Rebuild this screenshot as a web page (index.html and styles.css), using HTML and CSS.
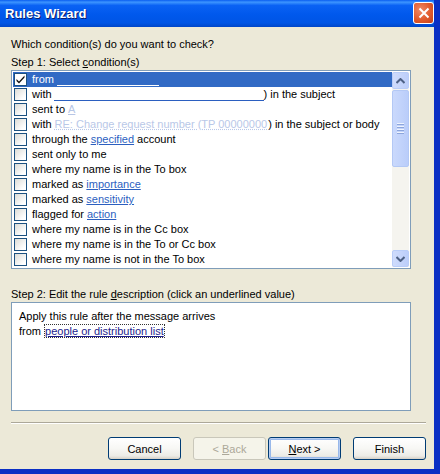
FILE: index.html
```html
<!DOCTYPE html>
<html lang="en">
<head>
    <meta charset="UTF-8">
    <title>Rules Wizard</title>
    <link rel="stylesheet" href="styles.css">
</head>
<body>
    <div class="window">
        <div class="titlebar">
            <span class="title">Rules Wizard</span>
            <div class="close">
                <svg width="12" height="12" viewBox="0 0 12 12"><path d="M1.5 1.5 L10.5 10.5 M10.5 1.5 L1.5 10.5" stroke="#fff" stroke-width="2" fill="none"/></svg>
            </div>
        </div>
        <div class="content">
            <div class="label">Which condition(s) do you want to check?</div>
            <div class="label">Step 1: Select <u>c</u>ondition(s)</div>

            <div class="listbox">
                <div class="rows">
                    <div class="row selected">
                        <span class="check checked">
                            <svg width="11" height="11" viewBox="0 0 11 11"><path d="M1.5 5 L4 7.5 L9.5 1.5 L9.5 3.5 L4 9.5 L1.5 7 Z" fill="#111"/></svg>
                        </span>
                        from <span class="hidden-link sel-link"></span>
                    </div>
                    <div class="row"><span class="check"></span>with <span class="hidden-link wide"></span>) in the subject</div>
                    <div class="row"><span class="check"></span>sent to <span class="faint">A</span></div>
                    <div class="row"><span class="check"></span>with <span class="faint-link">RE: Change request number (TP 00000000</span>) in the subject or body</div>
                    <div class="row"><span class="check"></span>through the <a class="link">specified</a> account</div>
                    <div class="row"><span class="check"></span>sent only to me</div>
                    <div class="row"><span class="check"></span>where my name is in the To box</div>
                    <div class="row"><span class="check"></span>marked as <a class="link">importance</a></div>
                    <div class="row"><span class="check"></span>marked as <a class="link">sensitivity</a></div>
                    <div class="row"><span class="check"></span>flagged for <a class="link">action</a></div>
                    <div class="row"><span class="check"></span>where my name is in the Cc box</div>
                    <div class="row"><span class="check"></span>where my name is in the To or Cc box</div>
                    <div class="row"><span class="check"></span>where my name is not in the To box</div>
                </div>
                <div class="scrollbar">
                    <div class="sb-btn">
                        <svg width="9" height="6" viewBox="0 0 9 6"><path d="M0.5 5 L4.5 1 L8.5 5" stroke="#4d6185" stroke-width="2" fill="none"/></svg>
                    </div>
                    <div class="sb-thumb">
                        <span></span><span></span><span></span><span></span>
                    </div>
                    <div class="sb-track"></div>
                    <div class="sb-btn">
                        <svg width="9" height="6" viewBox="0 0 9 6"><path d="M0.5 1 L4.5 5 L8.5 1" stroke="#4d6185" stroke-width="2" fill="none"/></svg>
                    </div>
                </div>
            </div>

            <div class="label step2">Step 2: Edit the rule <u>d</u>escription (click an underlined value)</div>
            <div class="desc">
                <div>Apply this rule after the message arrives</div>
                <div>from <a class="focus-link">people or distribution list</a></div>
            </div>

            <div class="separator"></div>

            <div class="buttons">
                <button class="btn">Cancel</button>
                <button class="btn disabled">&lt; <u>B</u>ack</button>
                <button class="btn default"><u>N</u>ext &gt;</button>
                <button class="btn finish">Finish</button>
            </div>
        </div>
    </div>
</body>
</html>
```

FILE: styles.css
```css
body {
    margin: 0;
    font-family: "Liberation Sans", Arial, sans-serif;
    font-size: 11px;
    color: #000;
    background: #ece9d8;
}
.window {
    width: 440px;
    height: 474px;
    box-sizing: border-box;
    display: flex;
    flex-direction: column;
    background: #ece9d8;
    border-right: 6px solid #0a2fc4;
    border-bottom: 5px solid #0a2fc4;
}
.titlebar {
    height: 27px;
    flex: none;
    display: flex;
    align-items: center;
    justify-content: space-between;
    padding: 0 0 0 5px;
    background: linear-gradient(to bottom, #0a5ef0 0%, #3d95ff 8%, #0a62f4 20%, #0058ec 55%, #0055e5 85%, #0046c8 100%);
}
.title {
    color: #fff;
    font-weight: bold;
    font-size: 13px;
    text-shadow: 1px 1px 0 #0a1f6e;
}
.close {
    width: 19px;
    height: 20px;
    margin-right: 0;
    margin-top: -2px;
    border: 1px solid #fff;
    border-radius: 3px;
    background: radial-gradient(circle at 35% 35%, #ef8a68 0%, #e15a2c 55%, #c4401a 100%);
    display: flex;
    align-items: center;
    justify-content: center;
}
.content {
    flex: 1;
    padding: 10px 8px 0 11px;
    display: flex;
    flex-direction: column;
}
.label {
    line-height: 14px;
    height: 14px;
    margin-bottom: 4px;
    white-space: nowrap;
}
.listbox {
    width: 400px;
    height: 199px;
    box-sizing: border-box;
    border: 1px solid #7f9db9;
    padding: 1px;
    margin-top: -3px;
    background: #fff;
    display: flex;
}
.rows {
    flex: 1;
}
.row {
    height: 15px;
    line-height: 15px;
    display: flex;
    align-items: center;
    padding-left: 1px;
    white-space: nowrap;
}
.row.selected {
    background: #316ac5;
    color: #fff;
}
.check {
    width: 11px;
    height: 11px;
    border: 1px solid #1c5180;
    background: linear-gradient(135deg, #dcdcd7 0%, #fff 80%);
    margin-right: 5px;
    flex: none;
    display: flex;
    align-items: center;
    justify-content: center;
}
.check.checked {
    background: #fff;
}
.hidden-link {
    display: inline-block;
    height: 12px;
    border-bottom: 1px solid #2b5fc0;
    margin-left: 3px;
}
.sel-link {
    width: 102px;
    border-bottom-color: #fff;
}
.wide {
    width: 210px;
    margin-left: 2px;
}
.faint {
    color: #b7c6e6;
    text-decoration: underline;
    margin-left: 3px;
}
.faint-link {
    color: #b9c8e8;
    text-decoration: underline dotted;
    margin-left: 3px;
    margin-right: 1px;
}
.link {
    color: #2c5fbf;
    text-decoration: underline;
    margin: 0 3px;
}
.scrollbar {
    width: 17px;
    flex: none;
    display: flex;
    flex-direction: column;
    background: #f5f4ef;
}
.sb-btn {
    height: 15px;
    border: 1px solid #b9cdf8;
    border-radius: 2px;
    background: linear-gradient(to right, #cfdcfc, #bccefa);
    display: flex;
    align-items: center;
    justify-content: center;
}
.sb-thumb {
    height: 75px;
    margin-top: 1px;
    border: 1px solid #b3c8f5;
    border-radius: 2px;
    background: linear-gradient(to right, #cad9fc, #bacdfa);
    display: flex;
    flex-direction: column;
    align-items: center;
    justify-content: center;
    gap: 1px;
}
.sb-thumb span {
    width: 7px;
    height: 1px;
    background: #eef3fe;
    border-bottom: 1px solid #8ca5dc;
}
.sb-track {
    flex: 1;
}
.step2 {
    margin-top: 18px;
    margin-bottom: 1px;
}
.desc {
    width: 400px;
    height: 109px;
    box-sizing: border-box;
    border: 1px solid #7f9db9;
    background: #fff;
    padding: 6px 7px;
    line-height: 15px;
}
.focus-link {
    color: #1c1c8c;
    text-decoration: underline;
    outline: 1px dotted #333;
    outline-offset: 0;
    margin-left: 1px;
}
.separator {
    margin-top: 11px;
    height: 1px;
    background: #aca899;
    border-bottom: 1px solid #fff;
}
.buttons {
    margin-top: 13px;
    display: flex;
    justify-content: flex-end;
    gap: 12px;
}
.btn {
    width: 73px;
    height: 23px;
    font-family: "Liberation Sans", Arial, sans-serif;
    font-size: 11px;
    color: #000;
    border: 1px solid #003c74;
    border-radius: 3px;
    background: linear-gradient(to bottom, #fff 0%, #f7f7f4 50%, #ecebe6 85%, #d6d0c5 100%);
    padding: 0;
}
.btn.disabled {
    color: #aca899;
    border-color: #c9c7ba;
    background: #f5f4ea;
}
.btn.default {
    margin-left: -10px;
    box-shadow: inset 0 0 0 1px #b7cdf2, inset 0 0 0 2px #98b8ea;
}
```
